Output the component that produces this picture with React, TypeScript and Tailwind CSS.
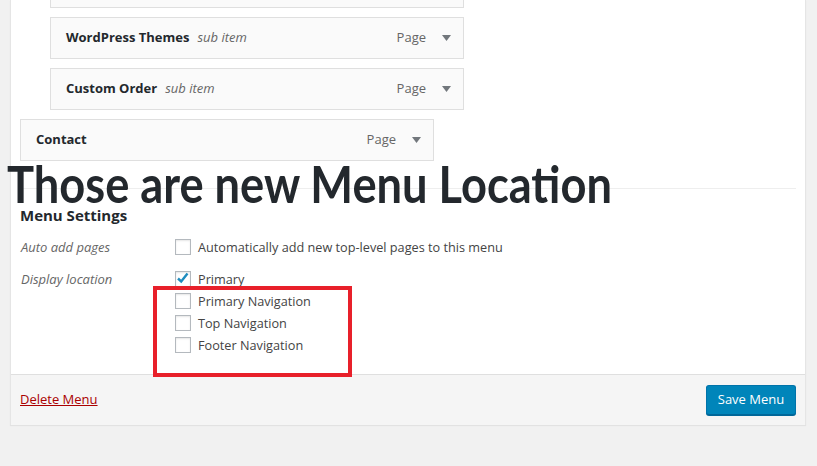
import React from "react";

const F = { fontFamily: '"Open Sans", "Noto Sans", sans-serif' };

function Item({ title, sub, indent }: { title: string; sub?: string; indent?: boolean }) {
  return (
    <div
      className={`${indent ? "ml-[30px]" : ""} w-[414px] h-[42px] border border-[#dfdfdf] bg-[#fafafa] flex items-center pl-[15px] pr-[12px] text-[13px]`}
    >
      <span className="font-bold text-[#23282d]">{title}</span>
      {sub && <span className="italic text-[#666] ml-[8px]">{sub}</span>}
      <span className="ml-auto text-[#666]">Page</span>
      <svg width="9" height="6" viewBox="0 0 9 6" className="ml-[16px]">
        <path d="M0 0 H9 L4.5 6 Z" fill="#72777c" />
      </svg>
    </div>
  );
}

function Box({ checked }: { checked?: boolean }) {
  return (
    <span className="relative w-[16px] h-[16px] border border-[#b4b9be] bg-white shadow-[inset_0_1px_2px_rgba(0,0,0,0.1)] shrink-0">
      {checked && (
        <svg width="18" height="18" viewBox="0 0 18 18" className="absolute left-[-2px] top-[-3px]">
          <path d="M4 9.5 L7.2 12.5 L13.5 4.5" stroke="#1e8cbe" strokeWidth="2.4" fill="none" />
        </svg>
      )}
    </span>
  );
}

function Check({ label, checked }: { label: string; checked?: boolean }) {
  return (
    <div className="flex items-center h-[16px] text-[12.7px] text-[#444]">
      <Box checked={checked} />
      <span className="ml-[7px] leading-none">{label}</span>
    </div>
  );
}

export default function App() {
  return (
    <div className="min-h-[466px] w-[817px] bg-[#f1f1f1] px-[10px] overflow-hidden" style={F}>
      <div className="relative flow-root w-[796px] bg-white border-x border-[#e5e5e5] shadow-[0_1px_1px_rgba(0,0,0,0.06)]">
        <div className="px-[9px]">
          <div className="flex flex-col gap-[9px] mt-[-34px]">
            <Item title="About" indent />
            <Item title="WordPress Themes" sub="sub item" indent />
            <Item title="Custom Order" sub="sub item" indent />
            <Item title="Contact" />
          </div>
          <div className="mt-[27px] h-px bg-[#eeeeee]" />
          <div className="mt-[16px] h-[20px] flex items-center text-[15px] font-bold text-[#23282d]">Menu Settings</div>
          <div className="mt-[14px] flex">
            <div className="w-[155px] pl-[1px] italic text-[13px] text-[#666] leading-[16px]">Auto add pages</div>
            <Check label="Automatically add new top-level pages to this menu" />
          </div>
          <div className="mt-[16px] flex">
            <div className="w-[155px] pl-[1px] italic text-[13px] text-[#666] leading-[16px]">Display location</div>
            <div className="flex flex-col gap-[6px]">
              <Check label="Primary" checked />
              <Check label="Primary Navigation" />
              <Check label="Top Navigation" />
              <Check label="Footer Navigation" />
            </div>
          </div>
          <div className="h-[21px]" />
        </div>
        <div className="h-[51px] border-t border-[#dfdfdf] bg-[#f5f5f5] flex items-center justify-between px-[9px]">
          <a href="#" className="text-[13px] text-[#a00] underline">Delete Menu</a>
          <button className="w-[90px] h-[30px] rounded-[3px] bg-[#0085ba] border border-[#0073aa] border-b-[#006799] text-white text-[13px] shadow-[0_1px_0_#006799]">
            Save Menu
          </button>
        </div>
        <div className="absolute left-[142px] top-[286px] w-[199px] h-[91px] border-[4px] border-[#e8202a] pointer-events-none" />
        <div
          className="absolute left-[-4px] top-[151px] text-[52px] font-bold text-[#23282d] leading-[64px] whitespace-nowrap origin-left scale-x-[0.87]"
          style={{ fontFamily: "Lato, sans-serif" }}
        >
          Those are new Menu Location
        </div>
      </div>
    </div>
  );
}
